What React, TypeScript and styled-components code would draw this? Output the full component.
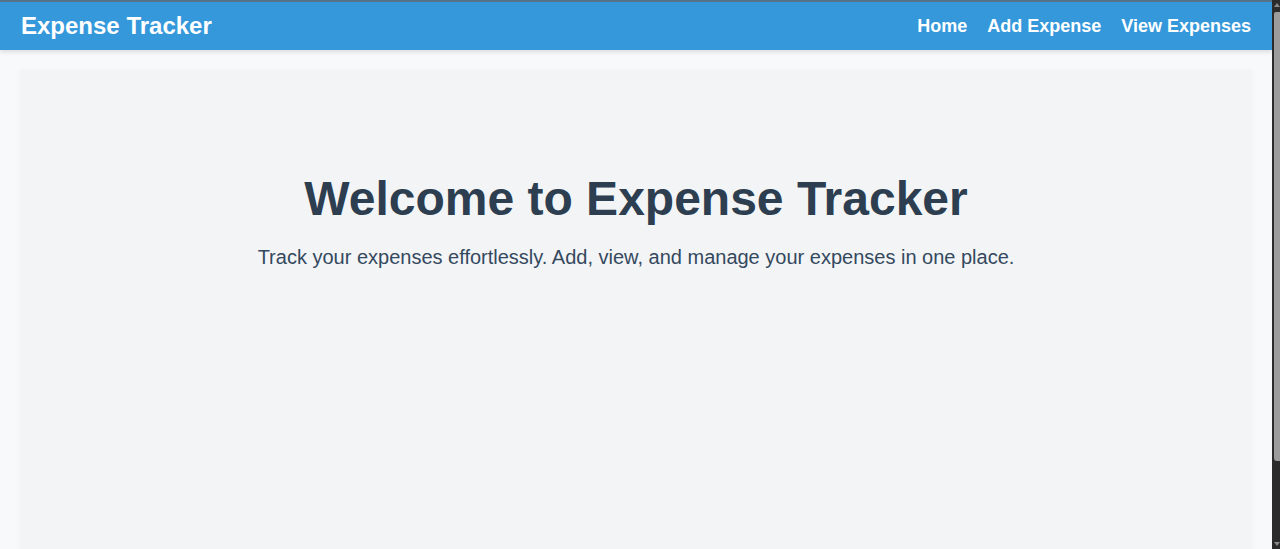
import React from "react";
import styled, { createGlobalStyle } from "styled-components";

const GlobalStyle = createGlobalStyle`
  body {
    margin: 0;
    background: #f8f9fb;
    font-family: "Liberation Sans", Arial, sans-serif;
    overflow: hidden;
  }
  * {
    box-sizing: border-box;
  }
`;

const Shell = styled.div`
  display: flex;
  height: 100vh;
`;

const Page = styled.div`
  flex: 1;
  min-width: 0;
  overflow: hidden;
  background: #f8f9fb;
`;

const ScrollRail = styled.div`
  width: 8px;
  flex: none;
  background: #2b2b2b;
  display: flex;
  flex-direction: column;
  align-items: flex-end;
  padding: 3px 0 3px;
`;

const Arrow = styled.div<{ $down?: boolean }>`
  width: 0;
  height: 0;
  margin-right: 0;
  border-left: 3px solid transparent;
  border-right: 3px solid transparent;
  ${(p) =>
    p.$down
      ? "border-top: 4px solid #8a8a8a; margin-top: auto;"
      : "border-bottom: 4px solid #8a8a8a;"}
`;

const Thumb = styled.div`
  width: 6px;
  height: 449px;
  margin-top: 5px;
  background: #9c9c9c;
  border-radius: 2px 0 0 3px;
`;

const NavBar = styled.nav`
  height: 50px;
  background: #3498db;
  border-top: 2px solid #557289;
  display: flex;
  align-items: center;
  justify-content: space-between;
  padding: 0 21px 0 21px;
  box-shadow: 0 2px 5px rgba(0, 0, 0, 0.12);
  position: relative;
`;

const Brand = styled.div`
  color: #ffffff;
  font-size: 24px;
  font-weight: 700;
`;

const NavLinks = styled.div`
  display: flex;
  gap: 20px;
`;

const NavLink = styled.a`
  color: #ffffff;
  font-size: 18px;
  font-weight: 700;
  text-decoration: none;
`;

const Main = styled.main`
  margin: 20px;
  min-height: 550px;
  background: #f3f4f6;
  box-shadow: 0 0 6px rgba(0, 0, 0, 0.03);
  padding: 101px 20px 40px;
  text-align: center;
`;

const Title = styled.h1`
  margin: 0 0 20px;
  font-size: 48px;
  font-weight: 700;
  color: #2c3e50;
`;

const Subtitle = styled.p`
  margin: 0;
  font-size: 20px;
  color: #34495e;
`;

export default function App() {
  return (
    <Shell>
      <GlobalStyle />
      <Page>
        <NavBar>
          <Brand>Expense Tracker</Brand>
          <NavLinks>
            <NavLink href="#">Home</NavLink>
            <NavLink href="#">Add Expense</NavLink>
            <NavLink href="#">View Expenses</NavLink>
          </NavLinks>
        </NavBar>
        <Main>
          <Title>Welcome to Expense Tracker</Title>
          <Subtitle>
            Track your expenses effortlessly. Add, view, and manage your expenses in one place.
          </Subtitle>
        </Main>
      </Page>
      <ScrollRail>
        <Arrow />
        <Thumb />
        <Arrow $down />
      </ScrollRail>
    </Shell>
  );
}
